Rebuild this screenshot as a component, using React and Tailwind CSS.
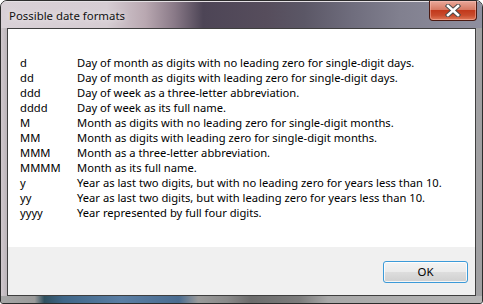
import React from "react";

const rows = [
  ["d", "Day of month as digits with no leading zero for single-digit days."],
  ["dd", "Day of month as digits with leading zero for single-digit days."],
  ["ddd", "Day of week as a three-letter abbreviation."],
  ["dddd", "Day of week as its full name."],
  ["M", "Month as digits with no leading zero for single-digit months."],
  ["MM", "Month as digits with leading zero for single-digit months."],
  ["MMM", "Month as a three-letter abbreviation."],
  ["MMMM", "Month as its full name."],
  ["y", "Year as last two digits, but with no leading zero for years less than 10."],
  ["yy", "Year as last two digits, but with leading zero for years less than 10."],
  ["yyyy", "Year represented by full four digits."],
];

function CloseButton() {
  return (
    <div className="absolute top-0 right-[5px] w-[48px] h-[20px] rounded-b-[4px] border border-t-0 border-[#4b1a12] bg-[linear-gradient(180deg,#e9a89a_0%,#d77a64_45%,#c2391c_50%,#c84a2c_75%,#e07858_100%)] shadow-[inset_0_0_0_1px_rgba(255,200,190,0.45)] flex items-center justify-center">
      <svg width="16" height="13" viewBox="0 0 16 13">
        <path d="M3 2 L13 11 M13 2 L3 11" stroke="#4a4a4a" strokeWidth="4.5" strokeLinecap="square" />
        <path d="M3 2 L13 11 M13 2 L3 11" stroke="#ffffff" strokeWidth="2.6" strokeLinecap="square" />
      </svg>
    </div>
  );
}

export default function App() {
  return (
    <div
      className="relative w-[483px] h-[304px] flex flex-col overflow-hidden rounded-t-[7px] rounded-b-[3px] border border-[#2c2c2c] bg-[linear-gradient(180deg,#cfc6cc_0%,#b4afb3_40%,#a3a3a5_100%)] text-black"
      style={{ fontFamily: '"Noto Sans", "Liberation Sans", sans-serif' }}
    >
      <div className="h-[27px] shrink-0 flex items-center pl-[8px] border-t border-[#e4e0e4] bg-[linear-gradient(90deg,#d9d1d7_0%,#d6cdd3_22%,#b9a8b1_30%,#8a7a88_36%,#4d4556_42%,#564d5c_55%,#5b5766_63%,#6f6d7d_73%,#81808f_83%,#8f8f9f_100%)]">
        <span className="text-[11.4px] leading-[15px] text-[#111] [text-shadow:0_0_6px_rgba(255,255,255,0.9)]">
          Possible date formats
        </span>
      </div>
      <CloseButton />

      <div className="flex-1 px-[6px] bg-[linear-gradient(90deg,#d0c8cd_0%,#bdb6bb_1.2%,transparent_2%,transparent_98%,#a0a0a2_99%)]">
        <div className="h-full flex flex-col border border-[#3f3f3f] bg-white">
          <div className="flex-1 pt-[26px] pl-[12px] text-[11.2px] leading-[15px]">
            {rows.map(([code, desc]) => (
              <div key={code} className="flex h-[15px]">
                <div className="w-[57px] shrink-0">{code}</div>
                <div>{desc}</div>
              </div>
            ))}
          </div>
          <div className="h-[48px] shrink-0 bg-[#f0f0f0] flex justify-end items-start pt-[14px] pr-[7px]">
            <button className="w-[85px] h-[22px] rounded-[3px] border border-[#3c9ad8] bg-[linear-gradient(180deg,#f3f3f3_0%,#ebebeb_48%,#dddddd_52%,#cfcfcf_100%)] shadow-[inset_0_0_0_1px_rgba(255,255,255,0.8)] text-[11.4px] leading-none text-black flex items-center justify-center">
              OK
            </button>
          </div>
        </div>
      </div>

      <div className="h-[7px] shrink-0 bg-[linear-gradient(90deg,#a6a6a6_0%,#9a9a9a_7%,#30505f_9%,#3f6688_13%,#5a7ea4_25%,#4a6c90_37%,#9a9a9a_41%,#8a8a8a_47%,#6c6c6c_52%,#7c7c7c_62%,#a8a8a8_68%,#b6b6b6_100%)]" />
    </div>
  );
}
